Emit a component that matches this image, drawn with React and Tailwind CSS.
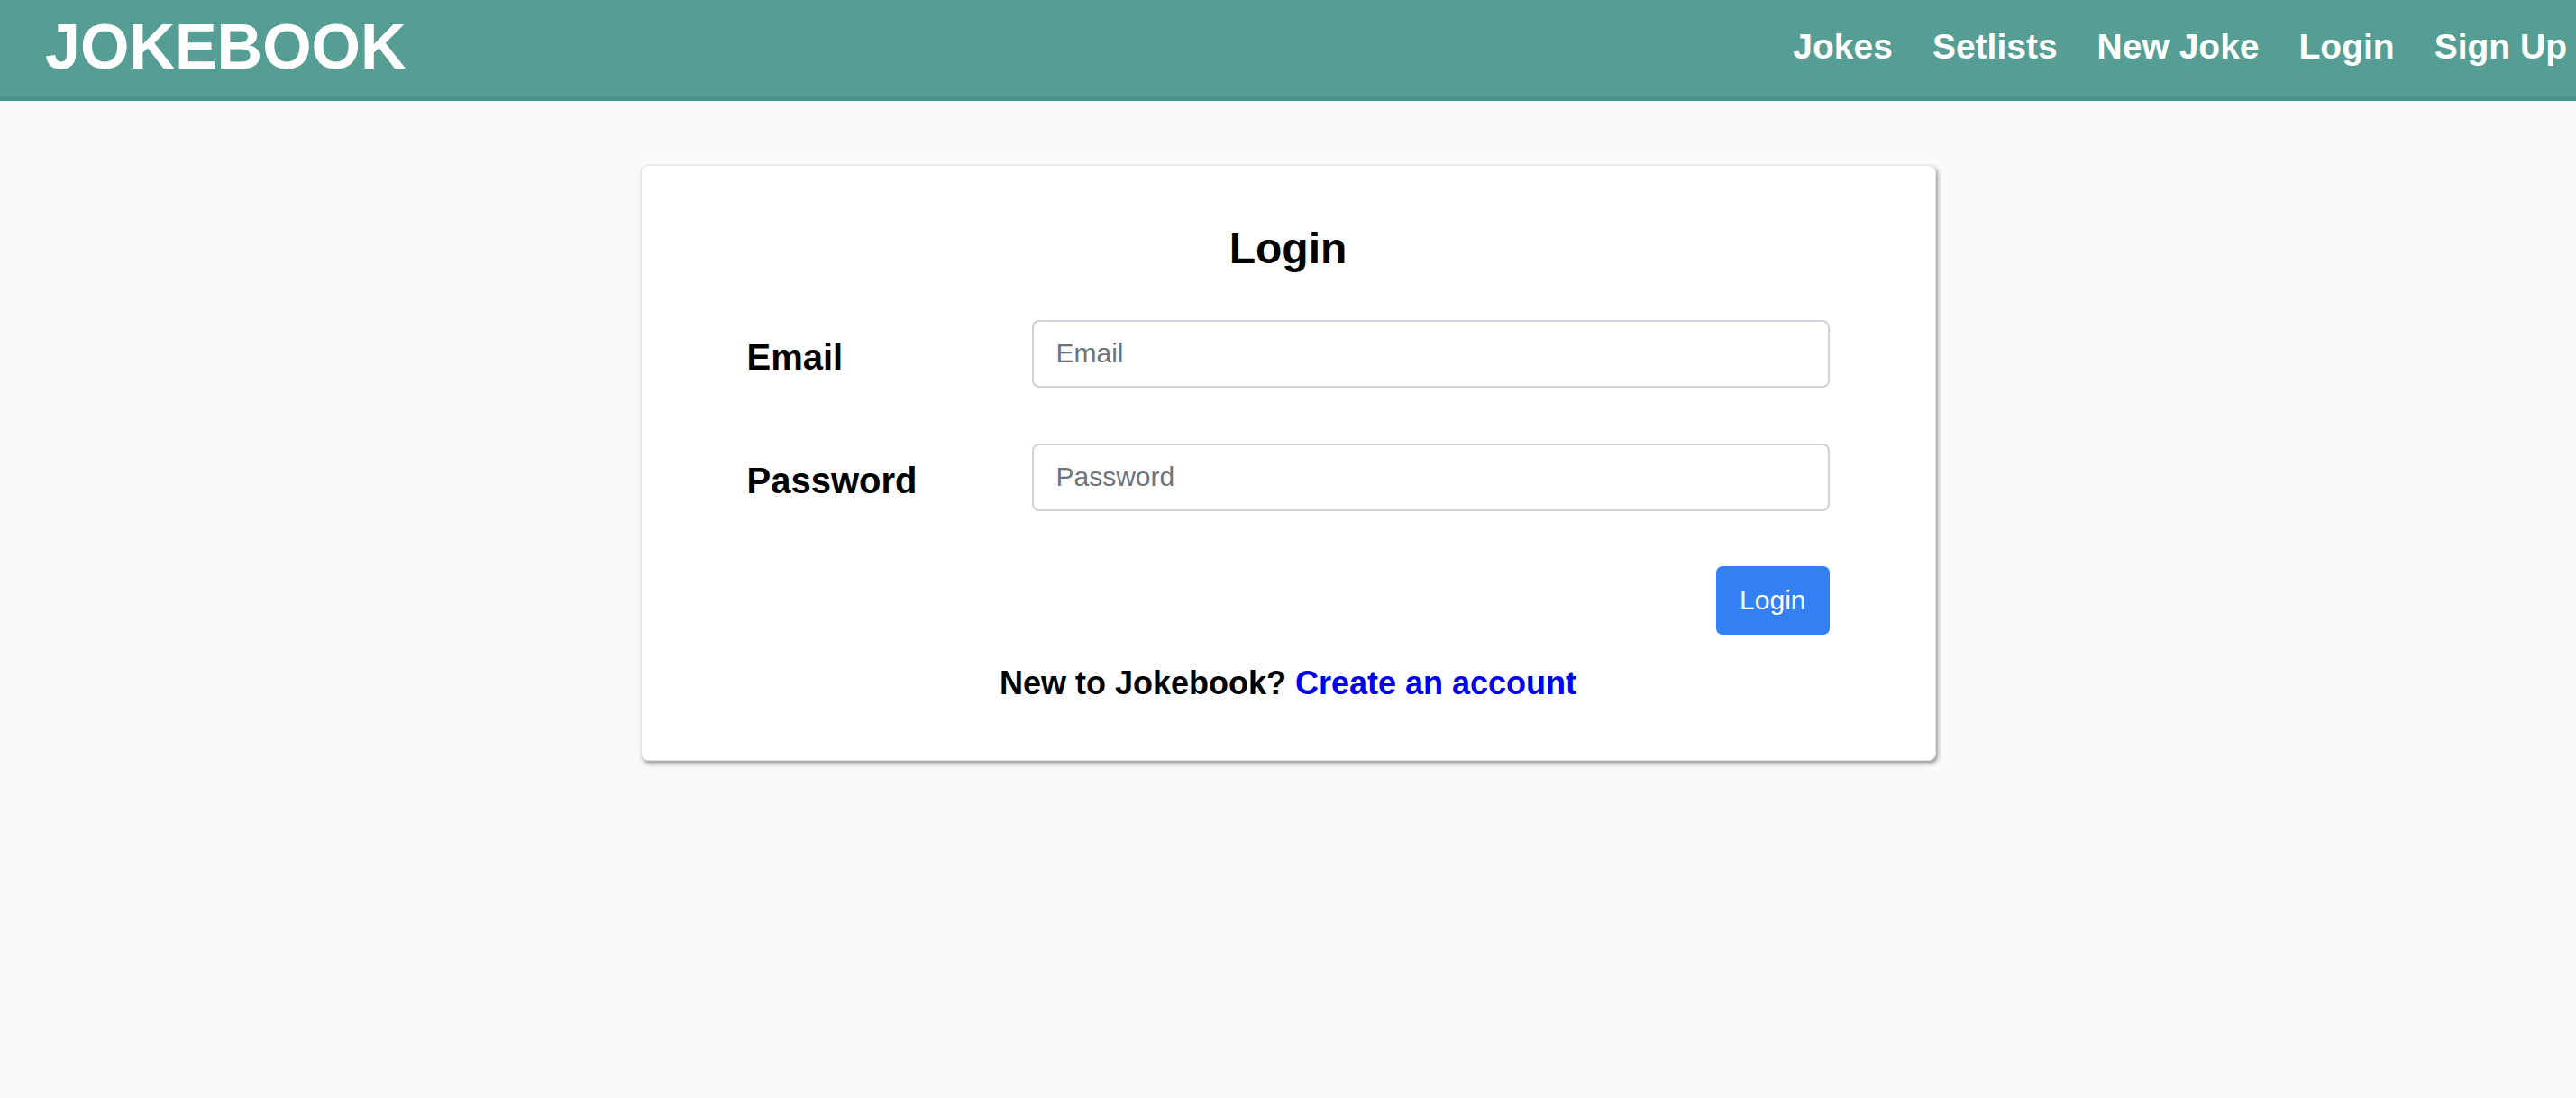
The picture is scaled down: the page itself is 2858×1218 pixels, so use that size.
import React from "react";

export default function App() {
    return (
        <div className="min-h-screen bg-[#fafafa] font-['Liberation_Sans',Arial,sans-serif]">
            <header className="h-[112px] bg-[#569e93] border-b-[5px] border-[#4d9086] flex items-center justify-between pl-[50px] pr-[10px] pb-[3px]">
                <h1 className="text-[70px] font-bold text-white leading-none">JOKEBOOK</h1>
                <nav className="flex items-center gap-[44px] text-[39px] font-bold text-white">
                    <a href="#">Jokes</a>
                    <a href="#">Setlists</a>
                    <a href="#">New Joke</a>
                    <a href="#">Login</a>
                    <a href="#">Sign Up</a>
                </nav>
            </header>

            <main className="flex justify-center pt-[71px]">
                <div className="w-[1437px] bg-white rounded-[8px] border border-[#e4e4e4] shadow-[2px_3px_5px_rgba(0,0,0,0.4)] px-[117px] pt-[63px] pb-[64px]">
                    <h2 className="text-[48px] font-bold text-black text-center leading-[1.2]">Login</h2>

                    <form className="mt-[50px]" onSubmit={(e) => e.preventDefault()}>
                        <div className="flex items-center">
                            <label className="w-[316px] shrink-0 text-[40px] font-bold text-black pt-[8px]">Email</label>
                            <input
                                type="email"
                                placeholder="Email"
                                className="flex-1 h-[75px] border-2 border-[#cdd2d8] rounded-[8px] px-[25px] text-[30px] text-black placeholder:text-[#6c757d] bg-white outline-none"
                            />
                        </div>
                        <div className="flex items-center mt-[62px]">
                            <label className="w-[316px] shrink-0 text-[40px] font-bold text-black pt-[8px]">Password</label>
                            <input
                                type="password"
                                placeholder="Password"
                                className="flex-1 h-[75px] border-2 border-[#cdd2d8] rounded-[8px] px-[25px] text-[30px] text-black placeholder:text-[#6c757d] bg-white outline-none"
                            />
                        </div>
                        <div className="flex justify-end mt-[61px]">
                            <button
                                type="submit"
                                className="h-[76px] px-[26px] bg-[#3380f5] text-white text-[30px] rounded-[7px]"
                            >
                                Login
                            </button>
                        </div>
                    </form>

                    <p className="mt-[32px] text-center text-[36px] font-bold text-black leading-[1.2]">
                        New to Jokebook?{" "}
                        <a href="#" className="text-[#0000ee]">Create an account</a>
                    </p>
                </div>
            </main>
        </div>
    );
}
